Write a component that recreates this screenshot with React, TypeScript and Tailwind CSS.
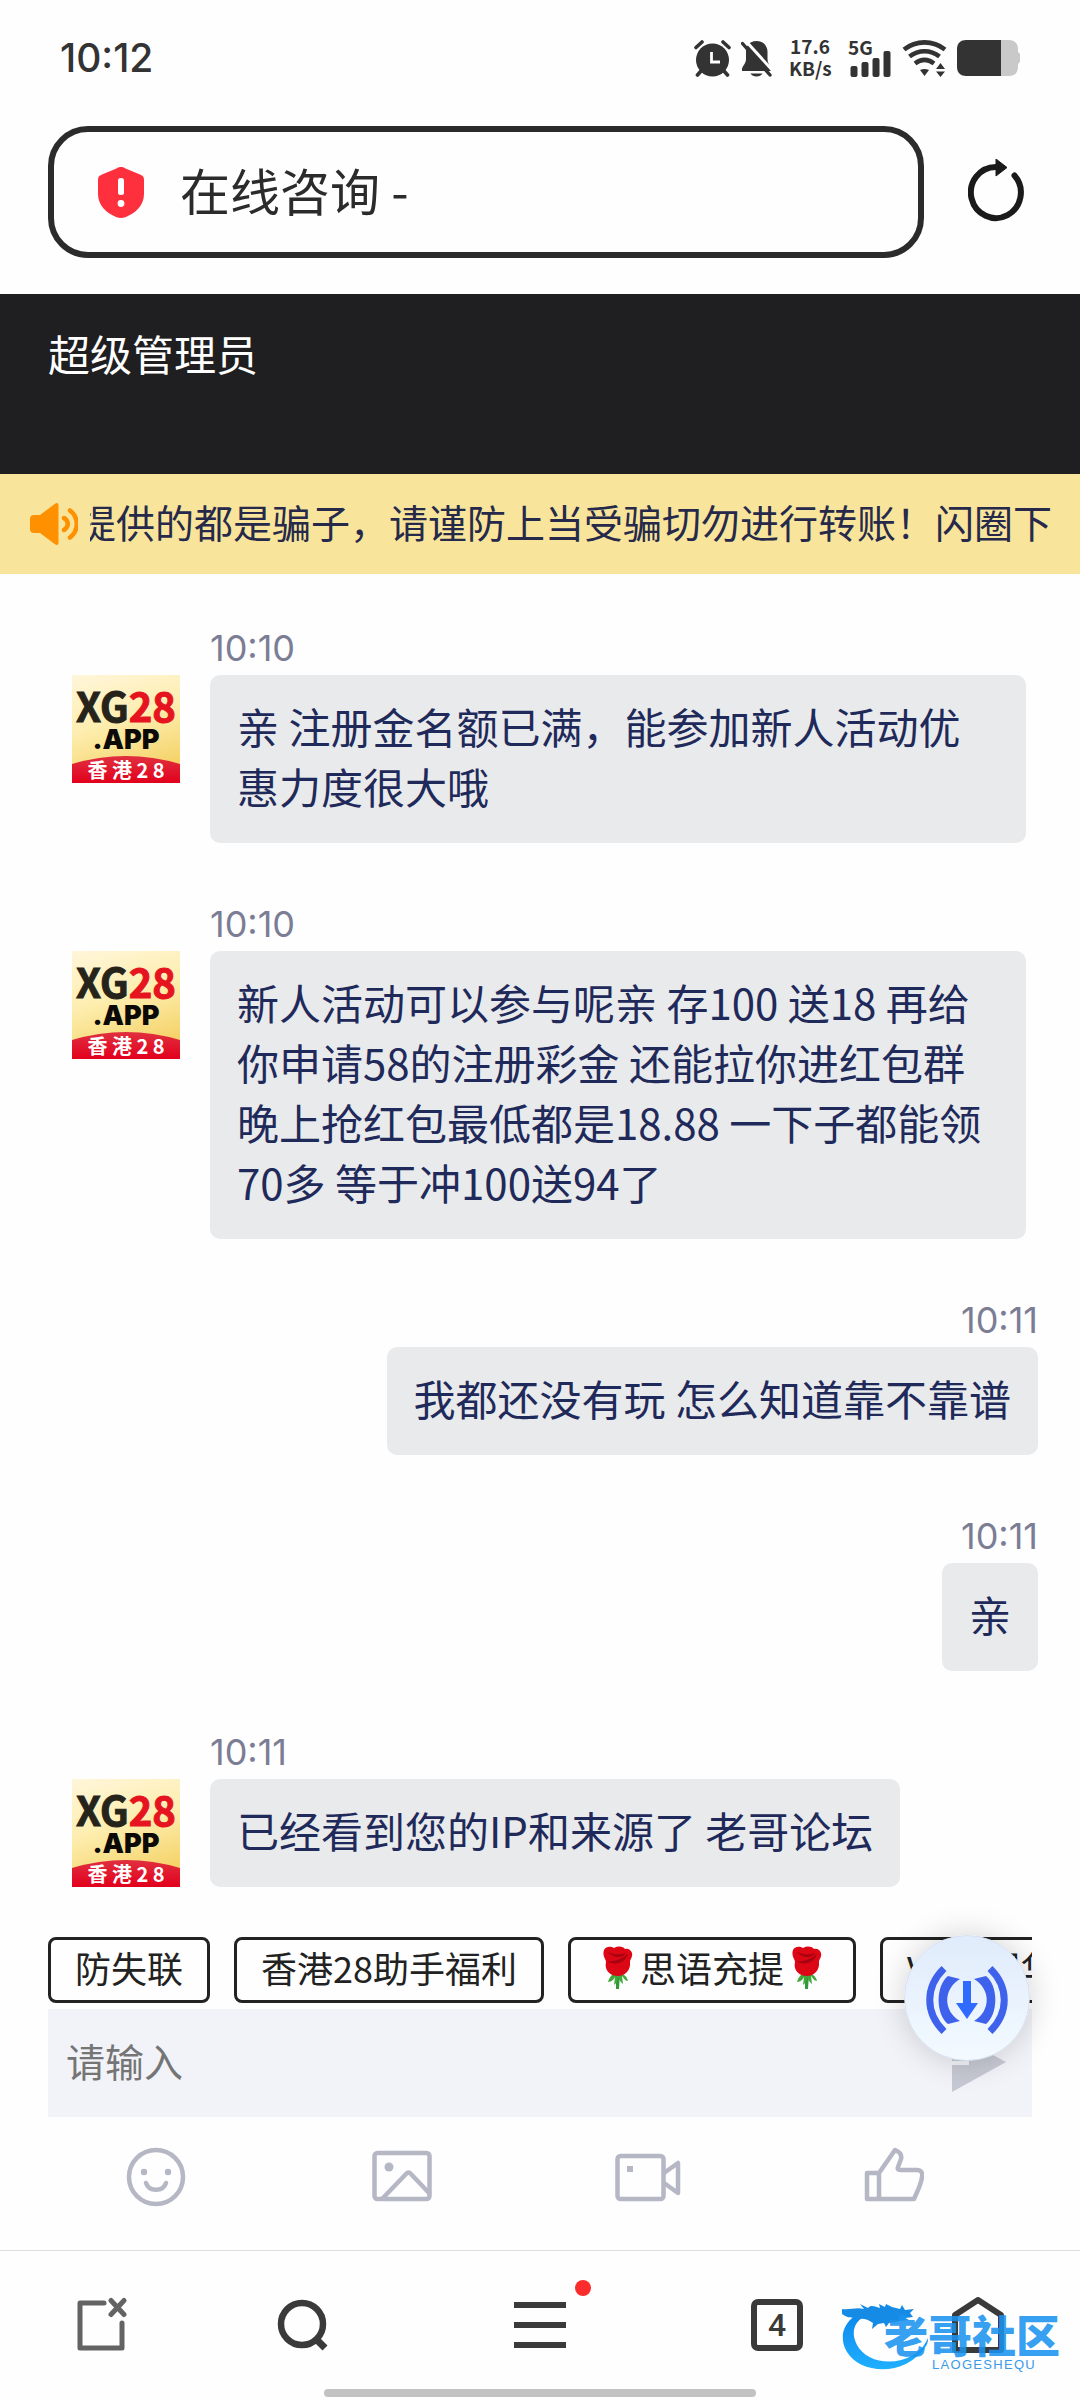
import type { ReactNode } from "react";
import { clsx } from "clsx";

interface Message {
  id: number;
  time: string;
  text: string;
  mine?: boolean;
}

const messages: Message[] = [
  { id: 1, time: "10:10", text: "亲 注册金名额已满，能参加新人活动优惠力度很大哦" },
  {
    id: 2,
    time: "10:10",
    text: "新人活动可以参与呢亲 存100 送18 再给你申请58的注册彩金 还能拉你进红包群 晚上抢红包最低都是18.88 一下子都能领70多 等于冲100送94了",
  },
  { id: 3, time: "10:11", text: "我都还没有玩 怎么知道靠不靠谱", mine: true },
  { id: 4, time: "10:11", text: "亲", mine: true },
  { id: 5, time: "10:11", text: "已经看到您的IP和来源了 老哥论坛" },
];

function StatusBar() {
  return (
    <div className="flex h-[116px] items-center justify-between pl-[60px] pr-[60px] text-[#333]">
      <span className="font-[Inter] text-[39px] leading-[40px] font-medium">10:12</span>
      <div className="flex items-center">
        <svg className="mr-[10px] h-[37px] w-[37px]" viewBox="0 0 37 37" fill="none" stroke="currentColor" strokeLinecap="round">
          <circle cx="18.5" cy="20" r="16.5" fill="currentColor" stroke="none" />
          <path d="M2 7.5 8 2M35 7.5 29 2M7 31l-3.500 4M30 31l3.500 4" strokeWidth="3.600" />
          <path d="M17.500 12v10H26" stroke="#fff" strokeWidth="2.800" strokeLinecap="butt" />
        </svg>
        <svg className="mr-[17px] h-[37px] w-[31px]" viewBox="0 0 31 37" fill="currentColor">
          <path d="M15.500 1C8 1 5 6.500 5 12v7c0 4-2.500 6-4 9.500V31h29v-2.500C28.500 25 26.500 23 26.500 19v-7C26.500 6.500 23 1 15.500 1z" />
          <path d="M9.500 33.500h12c-2 4-10 4-12 0z" />
          <path d="M3-1 32 31" stroke="#fff" strokeWidth="3" />
          <path d="M1.500 3.500 29 35" stroke="currentColor" strokeWidth="3.400" strokeLinecap="round" />
        </svg>
        <div className="mr-[17px] w-[42px] pb-[3px] text-center text-[19px] leading-[22px] font-bold">
          <div>17.6</div>
          <div>KB/s</div>
        </div>
        <div className="mr-[11px] flex w-[43px] flex-col">
          <span className="h-[14px] text-[19px] leading-[14px] font-bold">5G</span>
          <svg className="-mt-[3px] h-[26px] w-[43px]" viewBox="0 0 43 26" fill="currentColor">
            <rect x="2.500" y="15" width="7" height="11" rx="2" />
            <rect x="13.500" y="11" width="7" height="15" rx="2" />
            <rect x="24.500" y="7" width="7" height="19" rx="2" />
            <rect x="35.500" y="0" width="7" height="26" rx="2" />
          </svg>
        </div>
        <svg className="mr-[10px] h-[37px] w-[45px]" viewBox="0 0 45 37" fill="none" stroke="currentColor" strokeWidth="4.600">
          <path d="M2 9.500c12-9.500 29-9.500 41 0" />
          <path d="M7.500 16.500c9-7 21-7 30 0" />
          <path d="M13 23.500c6-4.500 13-4.500 19 0" />
          <path d="M18 30c3-1.500 6-1.500 9 0l-4.500 6z" fill="currentColor" stroke="none" />
          <path d="M34 29l4.500-6 4.500 6zM34 31.500h9l-4.500 5.500z" fill="currentColor" stroke="none" />
        </svg>
        <svg className="h-[36px] w-[63px]" viewBox="0 0 63 36">
          <path d="M44 0h8c6 0 9 4 9 9v3l2 2v8l-2 2v3c0 5-3 9-9 9h-8z" fill="#c9c9c9" />
          <path d="M9 0h35v36H9c-5 0-9-3-9-9V9c0-6 4-9 9-9z" fill="currentColor" />
        </svg>
      </div>
    </div>
  );
}

function AddressBar() {
  return (
    <div className="flex items-center pt-[10px] pr-[56px] pb-[36px] pl-[48px]">
      <div className="flex h-[132px] flex-1 items-center rounded-[40px] border-[6px] border-[#2b2b2b] pl-11">
        <svg className="h-[51px] w-[46px] shrink-0" viewBox="0 0 46 51">
          <path d="M23 0c2 0 3 .6 4.500 1.400L42 7.500c3 1.300 4 2.500 4 5.500v14c0 12-9 19-18 23-3.500 1.300-6.500 1.300-10 0C9 46 0 39 0 27V13c0-3 1-4.200 4-5.500L18.500 1.400C20 .6 21 0 23 0z" fill="#ff303e" />
          <rect x="20" y="11" width="6" height="17" rx="2.500" fill="#fff" />
          <circle cx="23" cy="36.500" r="3.400" fill="#fff" />
        </svg>
        <label htmlFor="page-address" className="sr-only">地址</label>
        <input
          id="page-address"
          defaultValue="在线咨询 -"
          className="ml-9 min-w-0 flex-1 bg-transparent pb-[6px] text-[50px] leading-[72px] text-[#2b2b2b] outline-none"
        />
      </div>
      <button type="button" aria-label="刷新" className="ml-11 text-[#1a1a1a]">
        <svg className="h-[66px] w-[56px]" viewBox="0 0 56 66" fill="none">
          <path d="M28 8A25 25.500 0 1 0 46.500 16.500" stroke="currentColor" strokeWidth="6" strokeLinecap="round" />
          <path d="M28 0l11 8.500L28 17z" fill="currentColor" stroke="currentColor" strokeWidth="1" strokeLinejoin="round" />
        </svg>
      </button>
    </div>
  );
}

function Notice() {
  return (
    <div className="flex items-center bg-[#f8e59b] py-[17px] pr-[28px] pl-[30px]">
      <svg className="mr-3 h-[42px] w-[48px] shrink-0" viewBox="0 0 48 42" fill="none">
        <path d="M4 12h6L25 .8c2-1.300 3.500-.8 3.500 1.500v37.400c0 2.300-1.500 2.800-3.500 1.500L10 30H4c-2.500 0-4-1.500-4-4V16c0-2.500 1.500-4 4-4z" fill="#ff9100" />
        <path d="M34 15c5 3 5 9 0 12M40 7.500c9 7 9 20 0 27" stroke="#ff9100" strokeWidth="4.500" strokeLinecap="round" />
      </svg>
      <p className="flex min-w-0 flex-1 justify-end overflow-hidden pb-[6px] text-[39px] leading-[60px] whitespace-nowrap text-[#26294a]">
        提供的都是骗子，请谨防上当受骗切勿进行转账！闪圈下
      </p>
    </div>
  );
}

function Avatar() {
  return (
    <svg className="h-[108px] w-[108px] shrink-0" viewBox="0 0 108 108" role="img" aria-label="XG28.APP">
      <defs>
        <linearGradient id="avatar-bg" x1="0" y1="0" x2="0.3" y2="1">
          <stop offset="0" stopColor="#fff6da" />
          <stop offset="0.5" stopColor="#fdeeb0" />
          <stop offset="1" stopColor="#f5d36a" />
        </linearGradient>
        <linearGradient id="avatar-red" x1="0" y1="0" x2="0" y2="1">
          <stop offset="0" stopColor="#e0303f" />
          <stop offset="1" stopColor="#e2001c" />
        </linearGradient>
      </defs>
      <rect width="108" height="108" fill="url(#avatar-bg)" />
      <path d="M0 89Q54 73 108 89v19H0z" fill="url(#avatar-red)" />
      <text x="54" y="47" textAnchor="middle" fontFamily="'Noto Sans CJK SC', sans-serif" fontWeight="700" fontSize="40" fill="#26241a" stroke="#26241a">
        XG<tspan fill="#e5141f" stroke="#e5141f">28</tspan>
      </text>
      <text x="54" y="74" textAnchor="middle" fontFamily="Inter, sans-serif" fontWeight="900" fontSize="27" fill="#0c0a08">.APP</text>
      <text x="54" y="103" textAnchor="middle" fontFamily="'Noto Sans CJK SC', sans-serif" fontWeight="700" fontSize="20" fill="#fff">香 港 2 8</text>
    </svg>
  );
}

function MessageItem({ message }: { message: Message }) {
  return (
    <li className={clsx("flex", message.mine ? "justify-end" : "pr-[12px]")}>
      {!message.mine && (
        <div className="mr-[30px] pt-[54px]">
          <Avatar />
        </div>
      )}
      <div className={clsx("flex min-w-0 flex-col", message.mine ? "items-end" : "items-start")}>
        <time className="font-[Inter] text-[36px] leading-[54px] text-[#7b7d95]">{message.time}</time>
        <p className="rounded-[10px] bg-[#e9eaec] px-[27px] pt-[21px] pb-[27px] text-[42px] leading-[60px] text-[#1f2a5a]">{message.text}</p>
      </div>
    </li>
  );
}

function Rose() {
  return (
    <svg className="h-[45px] w-[45px] shrink-0" viewBox="0 0 45 45">
      <path d="M21 29h4l-1 15h-3z" fill="#2f9a3a" />
      <path d="M22 28c-5 0-8 5-9 9 4 0 6-3 7-5l-1 8c3-2 4-6 4-9 1 3 2 6 5 8l-1-8c2 2 3 5 6 5-1-5-5-8-11-8z" fill="#43a83c" />
      <path d="M9 5c2-4 7-4 10-2 4-2 8-2 11 1 3-1 6 1 7 4 1 4-2 6-2 9 1 8-5 14-12 14-8 0-14-6-12-14 0-3-4-6-2-12z" fill="#dc0614" />
      <path d="M13 7c6 3 13 3 18 1-3 5-12 6-18-1zM12 16c7 1 14-1 21-7-3 9-13 12-21 7z" fill="#a50410" />
    </svg>
  );
}

function QuickReply({ children }: { children: ReactNode }) {
  return (
    <button type="button" className="flex shrink-0 items-center rounded-lg border-[3px] border-[#222] px-6 pb-[6px] text-[36px] leading-[54px] whitespace-nowrap text-[#222]">
      {children}
    </button>
  );
}

function Composer() {
  return (
    <div className="relative pr-[48px] pl-[48px]">
      <div className="flex gap-6 overflow-hidden">
        <QuickReply>防失联</QuickReply>
        <QuickReply>香港28助手福利</QuickReply>
        <QuickReply><Rose />思语充提<Rose /></QuickReply>
        <QuickReply>VX客服华</QuickReply>
      </div>
      <div className="mt-[6px] flex h-[108px] items-center bg-[#f2f3f8] pr-[26px] pl-[18px]">
        <label htmlFor="message" className="sr-only">消息</label>
        <input
          id="message"
          placeholder="请输入"
          className="min-w-0 flex-1 bg-transparent pb-[6px] text-[39px] leading-[60px] text-[#222] outline-none placeholder:text-[#757575]"
        />
        <button type="button" aria-label="发送" className="text-[#c6c9d3]">
          <svg className="h-[60px] w-[54px]" viewBox="0 0 54 60" fill="currentColor">
            <path d="M0 0l54 29L0 59V32h17v-4H0z" />
          </svg>
        </button>
      </div>
      <FloatingButton />
    </div>
  );
}

function FloatingButton() {
  return (
    <button
      type="button"
      aria-label="下载"
      className="absolute -top-[2px] right-[50px] flex h-[126px] w-[126px] items-center justify-center rounded-full border border-[#d6e0f0] bg-linear-to-b from-[#e0ebfb] to-[#f3faff] pt-1 shadow-[0_0_32px_rgba(0,0,0,0.18)]"
    >
      <svg className="h-[72px] w-[84px]" viewBox="0 0 84 72" fill="none">
        <path d="M19 4.500C0 23 0 49 19 67.500M65 4.500C84 23 84 49 65 67.500" stroke="#3f62ec" strokeWidth="7" />
        <path d="M23 12l12 3c-17 10-17 32 0 42l-12 3C10.500 50 10.500 22 23 12zM61 12l-12 3c17 10 17 32 0 42l12 3C73.500 50 73.500 22 61 12z" fill="#3f62ec" />
        <path d="M38 17h8v22h7L42 55 31 39h7z" fill="#2f6bff" />
      </svg>
    </button>
  );
}

function Toolbar() {
  return (
    <div className="grid grid-cols-4 pt-[30px] pr-[63px] pb-[43px] pl-[33px] text-[#b5b7c5]">
      <button type="button" aria-label="表情" className="flex justify-center">
        <svg className="h-[60px] w-[60px]" viewBox="0 0 60 60" fill="none" stroke="currentColor" strokeWidth="4.500">
          <circle cx="30" cy="30" r="27" />
          <path d="M20 36c3 9 17 9 20 0" strokeLinecap="round" />
          <circle cx="18" cy="25" r="3.200" fill="currentColor" stroke="none" />
          <circle cx="42" cy="25" r="3.200" fill="currentColor" stroke="none" />
        </svg>
      </button>
      <button type="button" aria-label="图片" className="flex justify-center">
        <svg className="h-[60px] w-[60px]" viewBox="0 0 60 60" fill="none" stroke="currentColor" strokeWidth="4.500">
          <rect x="2.500" y="6" width="55" height="46" rx="3" />
          <path d="M10 52l24-25c2-2 3-2 5 0l19 20" />
          <circle cx="17" cy="20" r="4.500" fill="currentColor" stroke="none" />
        </svg>
      </button>
      <button type="button" aria-label="视频" className="flex justify-center">
        <svg className="h-[60px] w-[66px]" viewBox="0 0 66 60" fill="none" stroke="currentColor" strokeWidth="4.500">
          <rect x="2.500" y="9" width="46" height="43" rx="3" />
          <path d="M49 26l14-10v30L49 36" strokeLinejoin="round" />
          <rect x="12" y="19" width="6" height="6" fill="currentColor" stroke="none" />
        </svg>
      </button>
      <button type="button" aria-label="点赞" className="flex justify-center">
        <svg className="h-[60px] w-[60px]" viewBox="0 0 60 60" fill="none" stroke="currentColor" strokeWidth="4.500" strokeLinejoin="round">
          <path d="M3 26h12v26H3zM15 26L31 3c5 2 7 5 6 9l-3 8c-1 3 1 3 3 3h16c4 0 6 3 5 7-1 8-5 15-8 22H15" />
        </svg>
      </button>
    </div>
  );
}

function BrowserNav() {
  return (
    <nav className="border-t border-[#dedede] pb-[3px] text-[#3a3a3a]">
      <div className="grid h-[138px] grid-cols-[204fr_198fr_276fr_198fr_204fr] items-center pt-[10px]">
        <button type="button" aria-label="关闭标签页" className="flex justify-center text-[#636363]">
          <svg className="h-[56px] w-[52px]" viewBox="0 0 52 56" fill="none" stroke="currentColor" strokeWidth="5" strokeLinecap="round" strokeLinejoin="round">
            <path d="M28 6H4v45h42V26" />
            <path d="M35 3.500l13 14M48 3.500l-13 14" />
          </svg>
        </button>
        <button type="button" aria-label="搜索" className="flex justify-center">
          <svg className="h-[52px] w-[52px]" viewBox="0 0 52 52" fill="none" stroke="currentColor">
            <circle cx="25" cy="25" r="21" strokeWidth="6.500" />
            <path d="M39 40l9 9" strokeWidth="7" />
          </svg>
        </button>
        <button type="button" aria-label="菜单" className="flex justify-center">
          <span className="relative">
            <svg className="h-[46px] w-[52px]" viewBox="0 0 52 46" fill="currentColor">
              <path d="M0 0h52v6H0zM0 20h52v6H0zM0 40h52v6H0z" />
            </svg>
            <span className="absolute -top-[22px] -right-[25px] h-4 w-4 rounded-full bg-[#fb2c2c]" />
          </span>
        </button>
        <button type="button" aria-label="标签页" className="flex justify-center">
          <span className="flex h-[52px] w-[52px] items-center justify-center rounded-[7px] border-[6px] border-[#3a3a3a] font-[Roboto] text-[32px] leading-[40px] font-medium">4</span>
        </button>
        <button type="button" aria-label="主页" className="flex justify-center">
          <svg className="h-[56px] w-[52px]" viewBox="0 0 52 56" fill="none" stroke="currentColor" strokeWidth="6" strokeLinejoin="round">
            <path d="M26 3l23 15v35H3V18z" />
          </svg>
        </button>
      </div>
      <div className="mx-auto h-2 w-[40%] rounded-full bg-[#c2c2c2]" />
    </nav>
  );
}

function Watermark() {
  return (
    <div className="pointer-events-none absolute right-[14px] bottom-[24px]">
      <svg className="h-[76px] w-[224px]" viewBox="0 0 224 76" role="img" aria-label="老哥社区">
        <defs>
          <linearGradient id="mark" x1="0" y1="0" x2="0" y2="1">
            <stop offset="0" stopColor="#0b84ea" />
            <stop offset="1" stopColor="#1fb0ff" />
          </linearGradient>
        </defs>
        <path d="M33 9C5 12-6 34 5 52c13 22 58 26 79-6 2-3 2-6 2-8-3 7-8 13-15 17-20 12-47 7-56-10C7 30 14 16 33 13z" fill="url(#mark)" />
        <path d="M0 9c8 1 14-2 22 0l-4-5 8 4c3-4 8-1 12 0l-1-4 6 3 1-3 6 3 8 2 2-4 3 5 9-1-4 4 3 4-8 1 4 2-10 1c-3 2-7 1-10 2l-3 4-2-4-6 1-6 5 1-6c-5-4-10-5-15-4-5-2-10 0-16-5z" fill="#168be6" />
        <text x="42" y="53" fontFamily="'Noto Sans CJK SC', sans-serif" fontWeight="900" fontSize="44" fill="#1b93ee" fillOpacity="0.9">老哥社区</text>
        <text x="90" y="69" fontFamily="'Liberation Sans', sans-serif" fontSize="13" className="tracking-widest" fill="#3a9be8">LAOGESHEQU</text>
      </svg>
    </div>
  );
}

export default function App() {
  return (
    <div className="relative bg-[#fefefe] font-['Noto_Sans_CJK_SC',sans-serif]">
      <StatusBar />
      <AddressBar />
      <header className="bg-[#1f1f21] px-[48px] pt-[29px] pb-[91px]">
        <h1 className="text-[42px] leading-[60px] text-white">超级管理员</h1>
      </header>
      <Notice />
      <main>
        <ul className="flex flex-col gap-[54px] pt-[47px] pr-[42px] pb-[50px] pl-[72px]">
          {messages.map((message) => (
            <MessageItem key={message.id} message={message} />
          ))}
        </ul>
        <Composer />
        <Toolbar />
      </main>
      <BrowserNav />
      <Watermark />
    </div>
  );
}
